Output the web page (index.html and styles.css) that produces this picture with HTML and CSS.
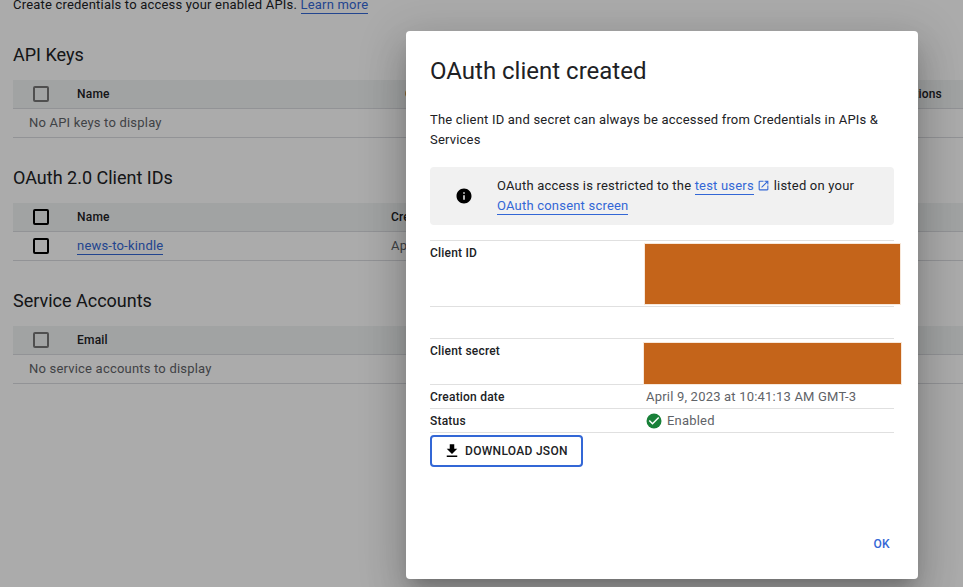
FILE: index.html
```html
<!DOCTYPE html>
<html lang="en">
<head>
  <meta charset="UTF-8">
  <title>Credentials</title>
  <link rel="stylesheet" href="styles.css">
</head>
<body>

  <div class="page">
    <p class="intro">Create credentials to access your enabled APIs. <a href="#" class="link">Learn more</a></p>

    <section>
      <h2>API Keys</h2>
      <div class="row head">
        <span class="check muted"></span>
        <span class="col-name">Name</span>
        <span class="col-date col-date-keys">Creation date</span>
        <span class="col-actions">Actions</span>
      </div>
      <div class="row empty">No API keys to display</div>
    </section>

    <section>
      <h2>OAuth 2.0 Client IDs</h2>
      <div class="row head">
        <span class="check"></span>
        <span class="col-name">Name</span>
        <span class="col-date">Creation date</span>
      </div>
      <div class="row">
        <span class="check"></span>
        <span class="col-name"><a href="#" class="link">news-to-kindle</a></span>
        <span class="col-date cell-grey">Apr 9, 2023</span>
      </div>
    </section>

    <section>
      <h2>Service Accounts</h2>
      <div class="row head">
        <span class="check muted"></span>
        <span class="col-name">Email</span>
      </div>
      <div class="row empty">No service accounts to display</div>
    </section>
  </div>

  <div class="scrim"></div>

  <div class="dialog">
    <h1>OAuth client created</h1>
    <p class="desc">The client ID and secret can always be accessed from Credentials in APIs &amp; Services</p>

    <div class="notice">
      <svg class="notice-icon" viewBox="0 0 24 24"><path d="M12 2C6.48 2 2 6.48 2 12s4.48 10 10 10 10-4.48 10-10S17.52 2 12 2zm1 15h-2v-6h2v6zm0-8h-2V7h2v2z"/></svg>
      <p>OAuth access is restricted to the <a href="#" class="link">test users</a>
        <svg class="ext-icon" viewBox="0 0 24 24"><path d="M19 19H5V5h7V3H5a2 2 0 0 0-2 2v14a2 2 0 0 0 2 2h14c1.1 0 2-.9 2-2v-7h-2v7zM14 3v2h3.59l-9.83 9.83 1.41 1.41L19 6.41V10h2V3h-7z"/></svg>
        listed on your<br><a href="#" class="link">OAuth consent screen</a></p>
    </div>

    <div class="info-row client-id">
      <span class="info-label">Client ID</span>
      <span class="info-value"><span class="redact redact-id"></span></span>
    </div>
    <div class="info-row client-secret">
      <span class="info-label">Client secret</span>
      <span class="info-value"><span class="redact redact-secret"></span></span>
    </div>
    <div class="info-row">
      <span class="info-label">Creation date</span>
      <span class="info-value">April 9, 2023 at 10:41:13 AM GMT-3</span>
    </div>
    <div class="info-row">
      <span class="info-label">Status</span>
      <span class="info-value status">
        <svg class="status-icon" viewBox="0 0 24 24"><circle cx="12" cy="12" r="10" fill="#188038"/><path d="M10 17l-5-5 1.41-1.41L10 14.17l7.59-7.59L19 8l-9 9z" fill="#fff"/></svg>
        Enabled
      </span>
    </div>

    <button class="download">
      <svg class="download-icon" viewBox="0 0 24 24"><path d="M19 9h-4V3H9v6H5l7 7 7-7zM5 18v2h14v-2H5z"/></svg>
      DOWNLOAD JSON
    </button>

    <div class="actions">
      <button class="ok">OK</button>
    </div>
  </div>

</body>
</html>
```

FILE: styles.css
```css
body {
  margin: 0;
  height: 587px;
  overflow: hidden;
  position: relative;
  font-family: Roboto, sans-serif;
  font-size: 13px;
  line-height: 20px;
  color: #202124;
  background-color: white;
}

.link {
  color: #3367d6;
  text-decoration: none;
  border-bottom: 1px solid #3367d6;
  padding-bottom: 1px;
}

/* page behind the dialog */
.page {
  margin-top: -5px;
  padding-left: 13px;
}

.intro {
  margin: 0;
  letter-spacing: 0.2px;
}

section h2 {
  margin: 0;
  padding: 28px 0 13px;
  font-size: 18px;
  font-weight: 400;
  line-height: 24px;
}

.row {
  display: flex;
  align-items: center;
  height: 28px;
  border-bottom: 1px solid #dadce0;
  letter-spacing: 0.2px;
}

.row.head {
  background-color: #f1f3f4;
  font-weight: 500;
  font-size: 12px;
}

.row.empty {
  padding-left: 16px;
  color: #5f6368;
}

.check {
  width: 12px;
  height: 12px;
  margin-left: 20px;
  border: 2px solid #000;
  border-radius: 2px;
}

.check.muted {
  border-color: #777;
}

.col-name {
  margin-left: 28px;
  width: 314px;
}

.col-date-keys {
  margin-left: 14px;
}

.col-date {
  white-space: nowrap;
}

.cell-grey {
  color: #5f6368;
}

.col-actions {
  margin-left: auto;
  margin-right: 21px;
}

.scrim {
  position: absolute;
  inset: 0;
  background: rgba(0, 0, 0, 0.33);
}

/* dialog */
.dialog {
  position: absolute;
  left: 406px;
  top: 31px;
  width: 464px;
  height: 500px;
  padding: 24px;
  display: flex;
  flex-direction: column;
  background: white;
  border-radius: 4px;
  box-shadow: 0 11px 15px -7px rgba(0,0,0,0.2), 0 24px 38px 3px rgba(0,0,0,0.14), 0 9px 46px 8px rgba(0,0,0,0.12);
}

.dialog h1 {
  margin: 0 0 23px;
  font-size: 24px;
  font-weight: 400;
  line-height: 32px;
}

.desc {
  margin: 0 0 17px;
  letter-spacing: 0.2px;
}

.notice {
  display: flex;
  align-items: center;
  padding: 9px 0;
  margin-bottom: 15px;
  background-color: #f1f1f1;
  border-radius: 4px;
  letter-spacing: 0.2px;
}

.notice p {
  margin: 0;
}

.notice-icon {
  flex: none;
  width: 18px;
  height: 18px;
  margin: 0 24px 0 25px;
}

.ext-icon {
  width: 13px;
  height: 13px;
  fill: #3367d6;
  vertical-align: -2px;
}

.info-row {
  display: flex;
  padding: 2px 0 1px;
  border-bottom: 1px solid #e0e0e0;
  letter-spacing: 0.2px;
}

.info-label {
  width: 216px;
  font-weight: 500;
  font-size: 12px;
}

.info-value {
  position: relative;
  color: #5f6368;
}

.client-id {
  height: 62px;
  border-top: 1px solid #e0e0e0;
  margin-bottom: 31px;
}

.client-secret {
  height: 42px;
  border-top: 1px solid #e0e0e0;
}

/* orange blocks lie over the hidden values */
.redact {
  position: absolute;
  background-color: #c4641a;
  box-shadow: 0 0 0 1px #f8e8da;
}

.redact-id {
  left: -1px;
  top: 1px;
  width: 255px;
  height: 60px;
}

.redact-secret {
  left: -2px;
  top: 2px;
  width: 257px;
  height: 41px;
}

.status {
  display: flex;
  align-items: center;
  gap: 4px;
}

.status-icon {
  width: 18px;
  height: 18px;
  margin-left: -1px;
}

.download {
  align-self: flex-start;
  display: flex;
  align-items: center;
  gap: 4px;
  box-sizing: border-box;
  width: 153px;
  height: 32px;
  margin-top: 2px;
  padding: 0 0 0 11px;
  font-family: Roboto, sans-serif;
  font-size: 12px;
  font-weight: 500;
  letter-spacing: 0.3px;
  color: #202124;
  background: white;
  border: 2px solid #3367d6;
  border-radius: 4px;
  cursor: pointer;
}

.download-icon {
  width: 18px;
  height: 18px;
}

.actions {
  margin-top: auto;
  margin-right: -4px;
  margin-bottom: -7px;
  display: flex;
  justify-content: flex-end;
}

.ok {
  height: 36px;
  padding: 0 8px;
  font-family: Roboto, sans-serif;
  font-size: 12px;
  font-weight: 500;
  letter-spacing: 0.3px;
  color: #3367d6;
  background: none;
  border: none;
  cursor: pointer;
}
```
